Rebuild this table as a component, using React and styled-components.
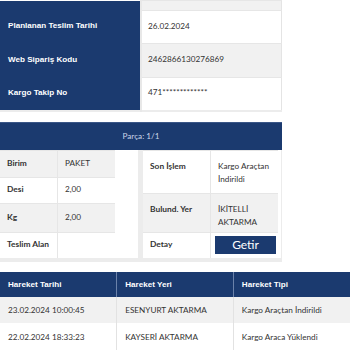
import React from "react";
import styled, { createGlobalStyle } from "styled-components";

const navy = "#1b3a6f";

const GlobalStyle = createGlobalStyle`
  html, body {
    margin: 0;
    padding: 0;
    background: #fff;
    font-family: Lato, "Open Sans", sans-serif;
    color: #333;
  }
`;

const Page = styled.div`
  width: 350px;
  height: 350px;
  overflow: hidden;
  display: flex;
  flex-direction: column;
`;

const InfoTable = styled.table`
  width: 282px;
  border-collapse: collapse;
  table-layout: fixed;
  border-right: 1px solid #e4e4e4;
  border-bottom: 2px solid #ececec;
`;

const InfoLabel = styled.th`
  width: 141px;
  background: ${navy};
  color: #fff;
  font-family: "Liberation Sans", Arial, sans-serif;
  font-weight: bold;
  font-size: 8.1px;
  text-align: left;
  padding: 0 0 3px 8px;
  height: ${(p) => p.$h}px;
  box-sizing: border-box;
  border-right: 2px solid #e8e8e8;
`;

const InfoValue = styled.td`
  background: ${(p) => (p.$gray ? "#f1f1f1" : "#fff")};
  font-size: 8.2px;
  color: #333;
  padding: 0 0 3px 6px;
  height: ${(p) => p.$h}px;
  box-sizing: border-box;
  border-top: 1px solid #e6e6e6;
`;

const PartCard = styled.div`
  width: 282px;
  margin-top: 10px;
  background: #ececec;
  padding-bottom: 4px;
`;

const PartHeader = styled.div`
  height: 28px;
  background: ${navy};
  border-top: 1px solid #3a5687;
  box-sizing: border-box;
  color: #c9d4e8;
  font-size: 8.2px;
  display: flex;
  align-items: center;
  justify-content: center;
`;

const PartBody = styled.div`
  display: grid;
  grid-template-columns: 138px 1fr;
  gap: 5px;
  padding-right: 1px;
`;

const Panel = styled.div`
  background: #fff;
  padding-right: ${(p) => p.$pad || 0}px;
`;

const DetailTable = styled.table`
  width: ${(p) => p.$w};
  border-collapse: collapse;
  table-layout: fixed;
`;

const DetailRow = styled.tr`
  background: ${(p) => (p.$gray ? "#f1f1f1" : "#fff")};
  height: ${(p) => p.$h}px;
`;

const DetailLabel = styled.td`
  font-weight: bold;
  font-size: 8.4px;
  line-height: 13px;
  color: #333;
  padding: 0 0 1px 7px;
  vertical-align: ${(p) => (p.$top ? "top" : "middle")};
  padding-top: ${(p) => (p.$top ? 9 : 0)}px;
  border-right: 1px solid #e6e6e6;
  border-top: 1px solid #e6e6e6;
`;

const DetailValue = styled.td`
  font-size: 8.2px;
  color: #333;
  line-height: 13px;
  padding: 0 0 1px 7px;
  vertical-align: ${(p) => (p.$top ? "top" : "middle")};
  padding-top: ${(p) => (p.$top ? 9 : 0)}px;
  border-top: 1px solid #e6e6e6;
`;

const FetchButton = styled.button`
  width: 61px;
  height: 18px;
  margin-left: -3px;
  border: none;
  background: ${navy};
  color: #fff;
  font-family: Lato, sans-serif;
  font-size: 12px;
  padding: 0;
  display: block;
`;

const MoveTable = styled.table`
  width: 350px;
  margin-top: 10px;
  border-collapse: collapse;
  table-layout: fixed;
`;

const MoveHead = styled.th`
  background: ${navy};
  color: #fff;
  font-family: "Liberation Sans", Arial, sans-serif;
  font-weight: bold;
  font-size: 8.1px;
  text-align: left;
  height: 25px;
  padding: 0 0 0 8px;
  border-left: 1px solid #6b82aa;
  &:first-child {
    border-left: none;
  }
`;

const MoveRow = styled.tr`
  background: ${(p) => (p.$gray ? "#f1f1f1" : "#fff")};
  height: ${(p) => p.$h}px;
`;

const MoveCell = styled.td`
  font-size: 8.2px;
  color: #333;
  padding: 0 0 0 8px;
  border-left: 1px solid #e2e2e2;
  &:first-child {
    border-left: none;
  }
`;

const info = [
  { label: "", value: "", h: 10, gray: true },
  { label: "Planlanan Teslim Tarihi", value: "26.02.2024", h: 33 },
  { label: "Web Sipariş Kodu", value: "2462866130276869", h: 34, gray: true },
  { label: "Kargo Takip No", value: "471*************", h: 33 },
];

const parcel = [
  { label: "Birim", value: "PAKET", h: 27, gray: true },
  { label: "Desi", value: "2,00", h: 26 },
  { label: "Kg", value: "2,00", h: 29, gray: true },
  { label: "Teslim Alan", value: "", h: 26 },
];

const moves = [
  { date: "23.02.2024 10:00:45", place: "ESENYURT AKTARMA", type: "Kargo Araçtan İndirildi" },
  { date: "22.02.2024 18:33:23", place: "KAYSERİ AKTARMA", type: "Kargo Araca Yüklendi" },
];

const App = () => (
  <Page>
    <GlobalStyle />
    <InfoTable>
      <tbody>
        {info.map((row, i) => (
          <tr key={i}>
            <InfoLabel $h={row.h}>{row.label}</InfoLabel>
            <InfoValue $h={row.h} $gray={row.gray}>
              {row.value}
            </InfoValue>
          </tr>
        ))}
      </tbody>
    </InfoTable>

    <PartCard>
      <PartHeader>Parça: 1/1</PartHeader>
      <PartBody>
        <Panel>
          <DetailTable $w="115px">
            <tbody>
              {parcel.map((row) => (
                <DetailRow key={row.label} $h={row.h} $gray={row.gray}>
                  <DetailLabel>{row.label}</DetailLabel>
                  <DetailValue>{row.value}</DetailValue>
                </DetailRow>
              ))}
            </tbody>
          </DetailTable>
        </Panel>
        <Panel $pad={3}>
          <DetailTable $w="100%">
            <tbody>
              <DetailRow $h={43}>
                <DetailLabel $top>Son İşlem</DetailLabel>
                <DetailValue $top>
                  Kargo Araçtan
                  <br />
                  İndirildi
                </DetailValue>
              </DetailRow>
              <DetailRow $h={39} $gray>
                <DetailLabel $top>Bulund. Yer</DetailLabel>
                <DetailValue $top>
                  İKİTELLİ
                  <br />
                  AKTARMA
                </DetailValue>
              </DetailRow>
              <DetailRow $h={26}>
                <DetailLabel>Detay</DetailLabel>
                <DetailValue>
                  <FetchButton>Getir</FetchButton>
                </DetailValue>
              </DetailRow>
            </tbody>
          </DetailTable>
        </Panel>
      </PartBody>
    </PartCard>

    <MoveTable>
      <thead>
        <tr>
          <MoveHead>Hareket Tarihi</MoveHead>
          <MoveHead>Hareket Yeri</MoveHead>
          <MoveHead>Hareket Tipi</MoveHead>
        </tr>
      </thead>
      <tbody>
        {moves.map((m, i) => (
          <MoveRow key={m.date} $gray={i % 2 === 0} $h={i === 0 ? 26 : 27}>
            <MoveCell>{m.date}</MoveCell>
            <MoveCell>{m.place}</MoveCell>
            <MoveCell>{m.type}</MoveCell>
          </MoveRow>
        ))}
      </tbody>
    </MoveTable>
  </Page>
);

export default App;
